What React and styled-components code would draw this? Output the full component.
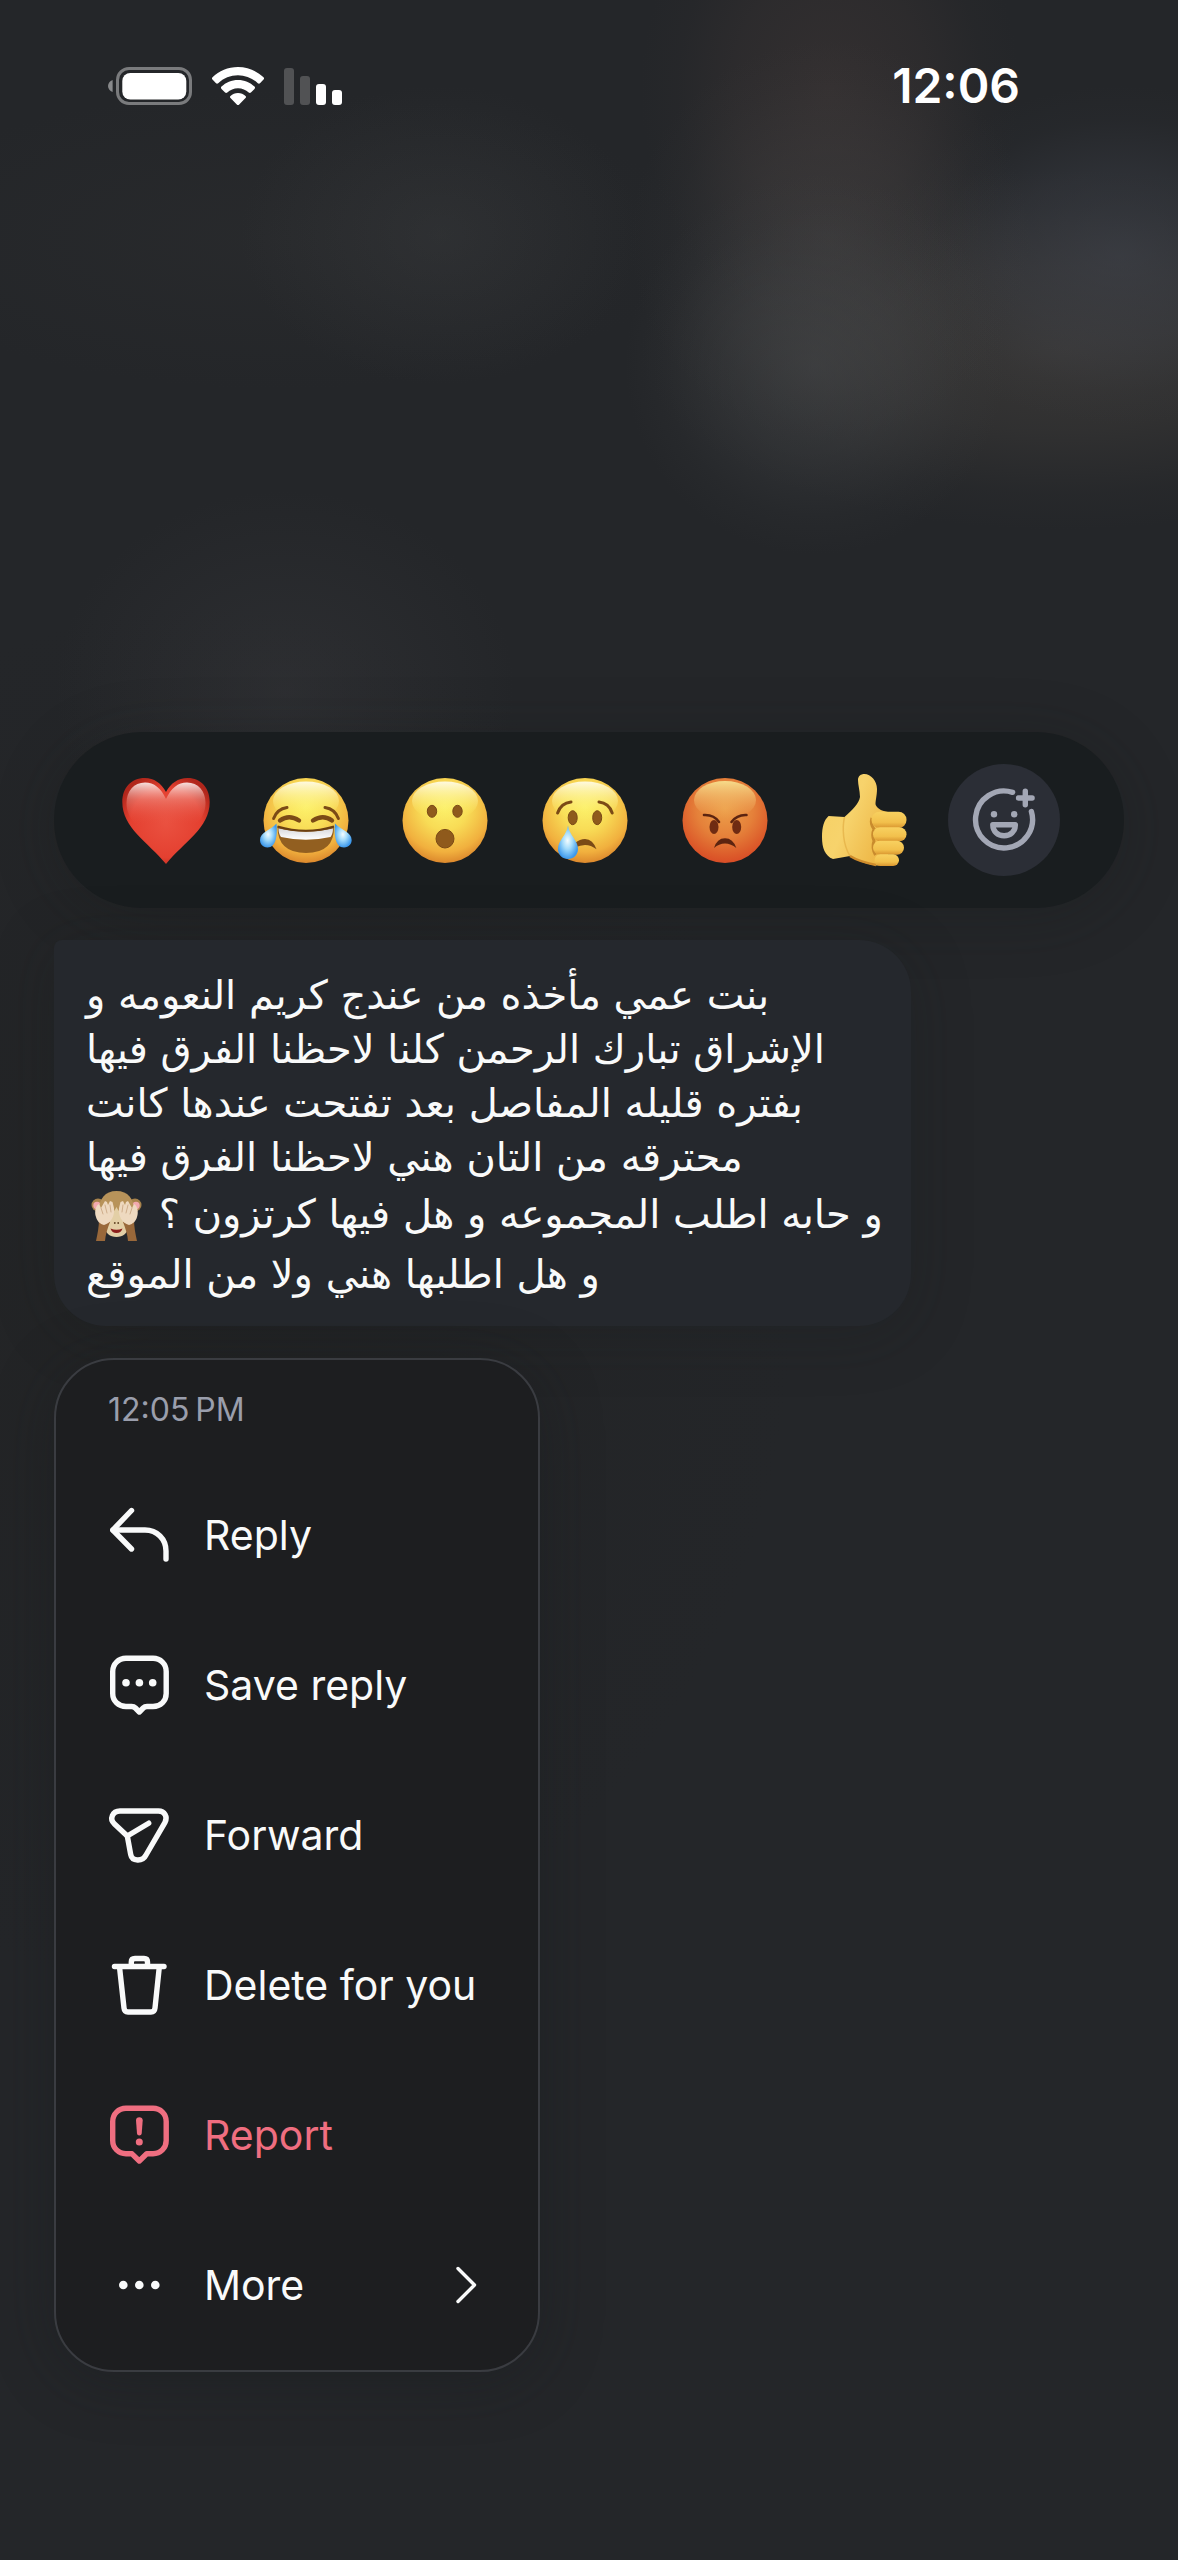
import React from "react";
import styled, { createGlobalStyle } from "styled-components";

const GlobalStyle = createGlobalStyle`
  *, *::before, *::after { box-sizing: border-box; }
  body { margin: 0; background: #242629; }
  button { font: inherit; color: inherit; border: 0; background: none; padding: 0; cursor: pointer; }
`;

const Screen = styled.div`
  min-height: 100vh;
  display: flex;
  flex-direction: column;
  font-family: Inter, "Liberation Sans", sans-serif;
  color: #f9fafa;
  background-color: #242629;
  background-image:
    radial-gradient(190px 190px at 815px 365px, rgba(72, 74, 76, 0.5), rgba(72, 74, 76, 0.3) 45%, rgba(72, 74, 76, 0.08) 80%, transparent),
    radial-gradient(200px 200px at 830px 240px, rgba(72, 70, 70, 0.45), rgba(72, 70, 70, 0.28) 45%, rgba(72, 70, 70, 0.07) 80%, transparent),
    radial-gradient(190px 240px at 830px 90px, rgba(72, 60, 58, 0.42), rgba(72, 60, 58, 0.24) 50%, rgba(72, 60, 58, 0.06) 80%, transparent),
    radial-gradient(230px 170px at 1120px 255px, rgba(68, 72, 82, 0.5), rgba(68, 72, 82, 0.28) 50%, rgba(68, 72, 82, 0.06) 80%, transparent),
    radial-gradient(420px 180px at 1060px 350px, rgba(72, 68, 64, 0.55), rgba(72, 68, 64, 0.34) 45%, rgba(72, 68, 64, 0.08) 80%, transparent),
    radial-gradient(200px 150px at 440px 235px, rgba(64, 66, 68, 0.3), transparent),
    radial-gradient(420px 150px at 280px 240px, rgba(56, 56, 56, 0.2), transparent),
    radial-gradient(230px 200px at 285px 690px, rgba(64, 64, 68, 0.32), transparent),
    radial-gradient(600px 700px at 200px 1300px, rgba(34, 35, 36, 0.8), transparent);
`;

const StatusBar = styled.header`
  height: 172px;
  padding: 0 158px 0 108px;
  display: flex;
  align-items: center;
  justify-content: space-between;
`;

const StatusIcons = styled.div`
  display: flex;
  align-items: center;
  gap: 20px;
`;

const Clock = styled.time`
  font-size: 48px;
  line-height: 56px;
  font-weight: 600;
  color: #ffffff;
`;

const Overlay = styled.main`
  padding: 560px 54px 54px;
  display: flex;
  flex-direction: column;
  align-items: flex-start;
  gap: 32px;
`;

const ReactionBar = styled.div`
  align-self: stretch;
  height: 176px;
  padding: 0 64px 0 56px;
  border-radius: 88px;
  display: flex;
  align-items: center;
  justify-content: space-between;
  background: #191d1f;
  box-shadow: 0 8px 60px rgba(24, 26, 28, 0.3);
`;

const Reaction = styled.button`
  width: 112px;
  height: 112px;
  border-radius: 50%;
  display: flex;
  align-items: center;
  justify-content: center;
  background: ${(p) => (p.$filled ? "#2b2e36" : "transparent")};
`;

const Bubble = styled.article`
  padding: 28px 28px 22px 32px;
  border-radius: 8px 52px 52px 52px;
  background: #25282d;
  box-shadow: 0 8px 60px rgba(24, 26, 28, 0.25);
`;

const Message = styled.p`
  margin: 0;
  text-align: left;
  font-family: "DejaVu Sans", sans-serif;
  font-size: 40px;
`;

const Line = styled.span`
  display: block;
  white-space: nowrap;
  line-height: ${(p) => (p.$tall ? 60 : 54)}px;
`;

const InlineEmoji = styled.svg`
  width: 52px;
  height: 52px;
  margin: 0 4px;
  vertical-align: -14px;
`;

const Menu = styled.section`
  width: 486px;
  max-width: 100%;
  padding-bottom: 10px;
  border: 2px solid #3a3c41;
  border-radius: 60px;
  background: #1d1e20;
  box-shadow: 0 8px 60px rgba(24, 26, 28, 0.35);
`;

const Sent = styled.time`
  height: 100px;
  padding-left: 52px;
  display: flex;
  align-items: center;
  font-size: 32px;
  line-height: 40px;
  color: #9a9eac;
`;

const MenuItem = styled.button`
  width: 100%;
  height: 150px;
  padding: 0 60px 0 48px;
  display: flex;
  align-items: center;
  gap: 28px;
  text-align: left;
  color: ${(p) => (p.$danger ? "#ef6e80" : "#f9fafa")};
`;

const MenuLabel = styled.span`
  flex: 1;
  font-size: 41px;
  line-height: 52px;
  white-space: nowrap;
`;

const Glyph = styled.svg`
  width: 72px;
  height: 72px;
  flex: none;
  fill: none;
  stroke: currentColor;
  stroke-width: 5.4;
  stroke-linecap: round;
  stroke-linejoin: round;
`;

const Dot = styled.circle`
  fill: currentColor;
  stroke: none;
`;

function Battery() {
  return (
    <svg width="84" height="38" viewBox="0 0 84 38" role="img" aria-label="Battery">
      <path d="M4.600 13v12C1.600 24 0 21.500 0 19s1.600-5 4.600-6Z" fill="#88898b" />
      <rect x="9.500" y="1.500" width="73" height="35" rx="11.500" fill="none" stroke="#7a7b7d" strokeWidth="3" />
      <rect x="14.300" y="6" width="64" height="26.500" rx="8" fill="#fff" />
    </svg>
  );
}

function Wifi() {
  return (
    <svg width="52" height="38" viewBox="0 0 52 38" role="img" aria-label="Wi-Fi" fill="#fff">
      <path d="M26 0C36 0 45 4 51.500 10.300c.7.7.7 1.600 0 2.300l-3.500 3.600c-.6.6-1.500.6-2.200 0C40.500 11 33.500 8.200 26 8.200S11.500 11 6.200 16.200c-.7.6-1.600.6-2.200 0L.5 12.600c-.7-.7-.7-1.600 0-2.300C7 4 16 0 26 0Z" />
      <path d="M26 13c6.400 0 12.200 2.500 16.500 6.600.7.7.7 1.600 0 2.300l-3.600 3.600c-.6.6-1.500.6-2.200 0C33.900 22.900 30.200 21.300 26 21.300s-7.900 1.600-10.700 4.200c-.7.6-1.600.6-2.200 0l-3.600-3.600c-.7-.7-.7-1.600 0-2.300C13.800 15.500 19.600 13 26 13Z" />
      <path d="M26 26c2.900 0 5.500 1.100 7.500 2.900.7.600.7 1.600 0 2.200l-6.300 6.300c-.7.700-1.700.7-2.400 0l-6.300-6.300c-.7-.6-.7-1.600 0-2.200C20.500 27.100 23.100 26 26 26Z" />
    </svg>
  );
}

function Signal() {
  return (
    <svg width="59" height="38" viewBox="0 0 59 38" role="img" aria-label="Signal">
      <rect x="0" y="1" width="10" height="37" rx="3" fill="#515254" />
      <rect x="16" y="9" width="10" height="29" rx="3" fill="#515254" />
      <rect x="32" y="17" width="10" height="21" rx="3" fill="#fff" />
      <rect x="48" y="23" width="10" height="15" rx="3" fill="#fff" />
    </svg>
  );
}

function EmojiDefs() {
  return (
    <defs>
      <radialGradient id="faceBody" cx="50%" cy="34%" r="68%">
        <stop offset="0" stopColor="#fcf06a" />
        <stop offset="0.4" stopColor="#f8dc56" />
        <stop offset="0.78" stopColor="#f1b03e" />
        <stop offset="1" stopColor="#d9822a" />
      </radialGradient>
      <linearGradient id="faceShine" x1="0" y1="0" x2="0" y2="1">
        <stop offset="0" stopColor="#fffdf0" stopOpacity="0.9" />
        <stop offset="0.8" stopColor="#fdf266" stopOpacity="0.15" />
        <stop offset="1" stopColor="#fdf266" stopOpacity="0" />
      </linearGradient>
      <radialGradient id="angryBody" cx="50%" cy="36%" r="66%">
        <stop offset="0" stopColor="#eda04a" />
        <stop offset="0.5" stopColor="#e5813a" />
        <stop offset="0.85" stopColor="#dc5a2a" />
        <stop offset="1" stopColor="#d84a26" />
      </radialGradient>
      <linearGradient id="angryShine" x1="0" y1="0" x2="0" y2="1">
        <stop offset="0" stopColor="#f6db8a" />
        <stop offset="1" stopColor="#f0a658" stopOpacity="0" />
      </linearGradient>
      <radialGradient id="heartBody" cx="50%" cy="52%" r="58%">
        <stop offset="0" stopColor="#ea5140" />
        <stop offset="0.7" stopColor="#e44030" />
        <stop offset="1" stopColor="#b0261b" />
      </radialGradient>
      <linearGradient id="heartShine" x1="0" y1="0" x2="0" y2="1">
        <stop offset="0" stopColor="#fff" stopOpacity="0.85" />
        <stop offset="0.4" stopColor="#f4b0a6" stopOpacity="0.4" />
        <stop offset="1" stopColor="#ea5140" stopOpacity="0" />
      </linearGradient>
      <radialGradient id="tear" cx="48%" cy="45%" r="55%">
        <stop offset="0" stopColor="#f4fdff" />
        <stop offset="0.45" stopColor="#a4dcfb" />
        <stop offset="1" stopColor="#3d99ec" />
      </radialGradient>
      <linearGradient id="thumbBody" x1="0" y1="0" x2="1" y2="0.6">
        <stop offset="0" stopColor="#f6cf62" />
        <stop offset="0.5" stopColor="#f7d36c" />
        <stop offset="1" stopColor="#eeb848" />
      </linearGradient>
      <linearGradient id="finger" x1="0" y1="0" x2="0" y2="1">
        <stop offset="0" stopColor="#f8d160" />
        <stop offset="0.65" stopColor="#f2c04c" />
        <stop offset="1" stopColor="#d9952f" />
      </linearGradient>
      <linearGradient id="teeth" x1="0" y1="0" x2="0" y2="1">
        <stop offset="0" stopColor="#d9d9dc" />
        <stop offset="1" stopColor="#fff" />
      </linearGradient>
    </defs>
  );
}

function Emoji({ label, children }) {
  return (
    <svg width="96" height="96" viewBox="0 0 96 96" role="img" aria-label={label}>
      {children}
    </svg>
  );
}

function FaceBase() {
  return (
    <>
      <circle cx="48" cy="48.500" r="42.500" fill="url(#faceBody)" />
      <ellipse cx="48" cy="29" rx="33" ry="19.500" fill="url(#faceShine)" />
    </>
  );
}

function Heart() {
  return (
    <Emoji label="Red heart">
      <path d="M48 20C43 11 36 6 26.800 6 13 6 4.300 16 4.300 30 4.300 56 30 70 48 92 66 70 91.700 56 91.700 30 91.700 16 83 6 69.600 6 60 6 53 11 48 20Z" fill="url(#heartBody)" />
      <path d="M48 27C43 16 36 10.500 27 10.500 16 10.500 8.500 19 8.500 31c0 9 4 16 10 22h59c6-6 10-13 10-22C87.500 19 80 10.500 69 10.500 60 10.500 53 16 48 27Z" fill="url(#heartShine)" />
    </Emoji>
  );
}

function Laugh() {
  return (
    <Emoji label="Face with tears of joy">
      <FaceBase />
      <g fill="none" stroke="#7b4a16" strokeLinecap="round">
        <path d="M15.600 46.500Q19 37 29 35.500" strokeWidth="3" />
        <path d="M80.400 46.500Q77 37 67 35.500" strokeWidth="3" />
        <path d="M22 48.500Q31 42 41 48.500" strokeWidth="4.400" />
        <path d="M55 48.500Q65 42 74 48.500" strokeWidth="4.400" />
      </g>
      <path d="M19.500 54.500Q48 63 76 54.500 76.500 81 48 81 19.500 81 19.500 54.500Z" fill="#925f20" />
      <path d="M20.500 56.500Q48 63 75 56.500 75 62 72.500 65 48 70.500 23 65 20.500 62 20.500 56.500Z" fill="url(#teeth)" />
      <path d="M19.500 54.500Q48 63 76 54.500" fill="none" stroke="#6b3f12" strokeWidth="2" />
      <path d="M18.500 51.500C19.500 62 18.500 75.500 9.500 75.500 4.500 75.500 2 71.500 2 68 2 60 13 58 18.500 51.500Z" fill="url(#tear)" />
      <path d="M77 51.500C76 62 77 75.500 86 75.500 91 75.500 93.700 71.500 93.700 68 93.700 60 83 58 77 51.500Z" fill="url(#tear)" />
    </Emoji>
  );
}

function Wow() {
  return (
    <Emoji label="Surprised face">
      <FaceBase />
      <g fill="#8f5a1c" stroke="#7b4a16" strokeWidth="1">
        <ellipse cx="35" cy="39.300" rx="4.700" ry="6" />
        <ellipse cx="60.500" cy="39.300" rx="4.700" ry="6" />
        <ellipse cx="48" cy="66.700" rx="9" ry="9.300" />
      </g>
    </Emoji>
  );
}

function Cry() {
  return (
    <Emoji label="Crying face">
      <FaceBase />
      <g fill="none" stroke="#7b4a16" strokeLinecap="round" strokeWidth="3">
        <path d="M20.600 41Q24 31 34 30" />
        <path d="M75.200 41Q72 31 62 30" />
      </g>
      <ellipse cx="35.700" cy="45.700" rx="4.500" ry="7" fill="#8f5a1c" stroke="#7b4a16" />
      <ellipse cx="60.200" cy="45.700" rx="4.500" ry="7" fill="#8f5a1c" stroke="#7b4a16" />
      <path d="M38 71Q43 67 48 67 56 67.500 59.500 77.300 54 73 48 73 43 73.500 39 75Z" fill="#7b4a16" />
      <path d="M31 53.500C32.500 64 41 68 41 77 41 83 36.500 87 31 87 25.500 87 21 83 21 77 21 68 29.500 64 31 53.500Z" fill="url(#tear)" />
    </Emoji>
  );
}

function Angry() {
  return (
    <Emoji label="Angry face">
      <circle cx="48" cy="48.500" r="42.500" fill="url(#angryBody)" />
      <ellipse cx="48" cy="28" rx="31" ry="19" fill="url(#angryShine)" />
      <g fill="none" stroke="#5c2410" strokeLinecap="round" strokeWidth="2.600">
        <path d="M27 43Q37 42.500 42 50" />
        <path d="M69.500 43Q60 42.500 54.500 50" />
      </g>
      <ellipse cx="37" cy="55" rx="4.500" ry="7" fill="#6f2b12" />
      <ellipse cx="59.700" cy="55" rx="4.500" ry="7" fill="#6f2b12" />
      <path d="M37 76Q40 66.300 48 66.300 56 66.300 59.300 76 54 71.500 48 71.500 42 71.500 37 76Z" fill="#5c2410" />
    </Emoji>
  );
}

function Thumb() {
  return (
    <Emoji label="Thumbs up">
      <path d="M12.600 44L28.500 45C36 38 43 32 44 25 43.800 18 42 13 42 8 42 4 45 2 48.300 2 55 2 61 9 61 17 61 24 59 30 59.700 33 62 37 66 39 72 40L72 93.500 60 93.500C48 91.500 40 88 34 84L17 87C9 84 6 76 6 65 6 55 8 48 12.600 44Z" fill="url(#thumbBody)" />
      <path d="M28.500 45C26 56 27 73 34 84" fill="none" stroke="#e0a83e" strokeWidth="1.500" opacity="0.6" />
      <path d="M34 84C42 89 50 91 60 93" fill="none" stroke="#cf8c2c" strokeWidth="2.500" />
      <path d="M56 46Q54 52 58 57 55.500 63 58 69 55.500 76 59.500 83" fill="none" stroke="#c98b2d" strokeWidth="3" />
      <rect x="55.500" y="39.700" width="35" height="16.300" rx="8" fill="url(#finger)" />
      <rect x="57" y="55.300" width="33.500" height="14" rx="7" fill="url(#finger)" />
      <rect x="57" y="68.700" width="31" height="14" rx="7" fill="url(#finger)" />
      <rect x="58.500" y="82.300" width="24.500" height="11.700" rx="5.800" fill="url(#finger)" />
    </Emoji>
  );
}

function AddReaction() {
  return (
    <svg width="112" height="112" viewBox="0 0 112 112" fill="none" stroke="#a3a7b5" strokeWidth="5.400" strokeLinecap="round" strokeLinejoin="round" aria-hidden="true">
      <path d="M64.600 28.300A28.500 28.500 0 1 0 83.400 47.500" />
      <path d="M77.300 27.200V40.800M70.500 34H84.100" />
      <circle cx="46" cy="50.300" r="3.200" fill="#a3a7b5" stroke="none" />
      <circle cx="66.200" cy="50.300" r="3.200" fill="#a3a7b5" stroke="none" />
      <path d="M44.800 60.800H67.400C67.400 67.500 62.500 71.800 56.100 71.800S44.800 67.500 44.800 60.800Z" />
    </svg>
  );
}

function Monkey() {
  return (
    <InlineEmoji viewBox="0 0 52 52" role="img" aria-label="See-no-evil monkey">
      <circle cx="8" cy="15" r="6.500" fill="#a8834c" />
      <circle cx="45" cy="15" r="6.500" fill="#a8834c" />
      <circle cx="7" cy="15.500" r="3.700" fill="#f2a9ae" />
      <circle cx="46" cy="15.500" r="3.700" fill="#f2a9ae" />
      <path d="M26.500 1C38 1 44 9 44 20 44 30 40 38 34 43H19C13 38 9 30 9 20 9 9 15 1 26.500 1Z" fill="#b8935a" />
      <path d="M26.500 17C29 23 38 30 38 37 38 43 33 47 26.500 47S15 43 15 37C15 30 24 23 26.500 17Z" fill="#e3cfa6" />
      <path d="M9 29L20 32C17.500 38 15.500 45 15 51H6C7.500 44 9 37 9 29Z" fill="#99683a" />
      <path d="M44 29L33 32C35.500 38 37.500 45 38 51H47C45.500 44 44 37 44 29Z" fill="#99683a" />
      <path d="M6 27C4 22 6 15 9 14L11 18 15 11 17 12 18 15 20 11 22.500 12 24 18C25 26 21 33 14 35 10 34 7 31 6 27Z" fill="#eed9c0" />
      <path d="M47 27C49 22 47 15 44 14L42 18 38 11 36 12 35 15 33 11 30.500 12 29 18C28 26 32 33 39 35 43 34 46 31 47 27Z" fill="#eed9c0" />
      <path d="M11 18L13 24M15 15L17 23M20 15L21 22M42 18L40 24M38 15L36 23M33 15L32 22" stroke="#cfae8c" strokeWidth="1" strokeLinecap="round" />
      <circle cx="24.800" cy="33" r="0.900" fill="#5e4222" />
      <circle cx="28.200" cy="33" r="0.900" fill="#5e4222" />
      <path d="M20.500 38.500Q26.500 41 32.500 38.500 31 43 26.500 43T20.500 38.500Z" fill="#8c1f1b" />
    </InlineEmoji>
  );
}

const ReplyIcon = () => (
  <Glyph viewBox="0 0 72 72" aria-hidden="true">
    <path d="M27.500 11.500L8.800 31 27.500 50" />
    <path d="M9 31H41C53 31 62 40 62 52V60" />
  </Glyph>
);

const SaveReplyIcon = () => (
  <Glyph viewBox="0 0 72 72" aria-hidden="true">
    <path d="M22 9.300H49C56.500 9.300 62.200 15 62.200 22.500V44.500C62.200 52 56.500 57.500 49 57.500H43C41 57.500 40.200 58 39.200 59L35.300 63 31.400 59C30.400 58 29.600 57.500 27.600 57.500H22C14.500 57.500 8.700 52 8.700 44.500V22.500C8.700 15 14.500 9.300 22 9.300Z" />
    <Dot cx="22" cy="33.700" r="3.800" />
    <Dot cx="35.400" cy="33.700" r="3.800" />
    <Dot cx="48.700" cy="33.700" r="3.800" />
  </Glyph>
);

const ForwardIcon = () => (
  <Glyph viewBox="0 0 72 72" aria-hidden="true">
    <path d="M16 12H54.500C60.500 12 64 18 61 23.300L42 56C38.500 63 28 62.500 26.700 55.500L23.300 37 10.500 25C5 20 8.500 12 16 12Z" />
    <path d="M23.300 37L44.700 24.200" />
  </Glyph>
);

const TrashIcon = () => (
  <Glyph viewBox="0 0 72 72" aria-hidden="true">
    <path d="M10.500 17.500H60" />
    <path d="M27.300 17V13C27.300 10.600 28.700 9.500 31 9.500H40C42.200 9.500 43.500 10.600 43.500 13V17" />
    <path d="M15.500 18L20 59C20.300 61.700 21.500 63 24 63H47C49.500 63 50.700 61.700 51 59L55.300 18" />
  </Glyph>
);

const ReportIcon = () => (
  <Glyph viewBox="0 0 72 72" aria-hidden="true">
    <path d="M22 9.300H49C56.500 9.300 62.200 15 62.200 22.500V41.500C62.200 49 56.500 54.800 49 54.800H42.700L35.300 62 28 54.800H22C14.500 54.800 8.700 49 8.700 41.500V22.500C8.700 15 14.500 9.300 22 9.300Z" />
    <path d="M32 21.500C32 19.500 33.300 18.300 35.300 18.300S38.700 19.500 38.700 21.500L37.700 34.500C37.500 35.800 36.500 36.500 35.300 36.500S33.200 35.800 33 34.500Z" fill="currentColor" stroke="none" />
    <Dot cx="35.300" cy="43" r="3.500" />
  </Glyph>
);

const MoreIcon = () => (
  <Glyph viewBox="0 0 72 72" aria-hidden="true">
    <Dot cx="19.300" cy="36" r="4.300" />
    <Dot cx="35.300" cy="36" r="4.300" />
    <Dot cx="51.300" cy="36" r="4.300" />
  </Glyph>
);

const Chevron = () => (
  <svg width="24" height="40" viewBox="0 0 24 40" fill="none" stroke="currentColor" strokeWidth="3.400" strokeLinecap="round" strokeLinejoin="round" aria-hidden="true">
    <path d="M4 3.500L20.500 20 4 36.500" />
  </svg>
);

const reactions = [Heart, Laugh, Wow, Cry, Angry, Thumb];

const lines = [
  { text: "بنت عمي مأخذه من عندج كريم النعومه و" },
  { text: "الإشراق تبارك الرحمن كلنا لاحظنا الفرق فيها" },
  { text: "بفتره قليله المفاصل بعد تفتحت عندها كانت" },
  { text: "محترقه من التان هني لاحظنا الفرق فيها" },
  { text: "و حابه اطلب المجموعه و هل فيها كرتزون ؟ ", tall: true, monkey: true },
  { text: "و هل اطلبها هني ولا من الموقع", tall: true },
];

const actions = [
  { label: "Reply", Icon: ReplyIcon },
  { label: "Save reply", Icon: SaveReplyIcon },
  { label: "Forward", Icon: ForwardIcon },
  { label: "Delete for you", Icon: TrashIcon },
  { label: "Report", Icon: ReportIcon, danger: true },
  { label: "More", Icon: MoreIcon, submenu: true },
];

export default function App() {
  return (
    <Screen>
      <GlobalStyle />
      <StatusBar>
        <StatusIcons>
          <Battery />
          <Wifi />
          <Signal />
        </StatusIcons>
        <Clock>12:06</Clock>
      </StatusBar>
      <Overlay>
        <ReactionBar>
          {reactions.map((Face, i) => (
            <Reaction key={i} type="button">
              <Face />
            </Reaction>
          ))}
          <Reaction type="button" $filled aria-label="Add reaction">
            <AddReaction />
          </Reaction>
        </ReactionBar>
        <Bubble>
          <Message dir="rtl" lang="ar">
            {lines.map((line) => (
              <Line key={line.text} $tall={line.tall}>
                {line.text}
                {line.monkey && <Monkey />}
              </Line>
            ))}
          </Message>
        </Bubble>
        <Menu>
          <Sent>12:05{"\u2009"}PM</Sent>
          {actions.map(({ label, Icon, danger, submenu }) => (
            <MenuItem key={label} type="button" $danger={danger}>
              <Icon />
              <MenuLabel>{label}</MenuLabel>
              {submenu && <Chevron />}
            </MenuItem>
          ))}
        </Menu>
      </Overlay>
      <svg width="0" height="0" aria-hidden="true">
        <EmojiDefs />
      </svg>
    </Screen>
  );
}
